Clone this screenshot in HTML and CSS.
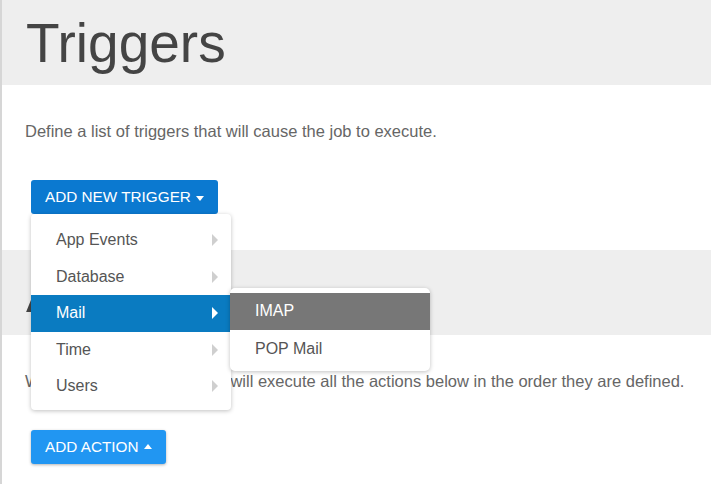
FILE: index.html
```html
<!DOCTYPE html>
<html>
<head>
<meta charset="utf-8">
<link rel="stylesheet" href="styles.css">
</head>
<body>
<div class="page">
  <div class="band"><h1 class="title">Triggers</h1></div>
  <p class="desc">Define a list of triggers that will cause the job to execute.</p>
  <div class="btn-wrap">
    <button class="btn btn-primary">ADD NEW TRIGGER <span class="caret-down"></span></button>
    <ul class="menu">
      <li class="item">App Events<span class="arrow"></span></li>
      <li class="item">Database<span class="arrow"></span></li>
      <li class="item active">Mail<span class="arrow"></span>
        <ul class="submenu">
          <li class="sub-item hover">IMAP</li>
          <li class="sub-item">POP Mail</li>
        </ul>
      </li>
      <li class="item">Time<span class="arrow"></span></li>
      <li class="item">Users<span class="arrow"></span></li>
    </ul>
  </div>
  <div class="band band-2"><h1 class="title">Actions</h1></div>
  <p class="desc">When the job is triggered, it will execute all the actions below in the order they are defined.</p>
  <div class="btn-wrap">
    <button class="btn btn-light">ADD ACTION <span class="caret-up"></span></button>
  </div>
</div>
</body>
</html>
```
FILE: styles.css
```css
html, body {
  margin: 0;
  padding: 0;
  background: #fff;
  font-family: "Liberation Sans", Arial, sans-serif;
}
.page {
  border-left: 2px solid #d6d6d6;
  min-height: 484px;
  box-sizing: border-box;
}
.band {
  background: #eeeeee;
  height: 85px;
  padding-left: 24px;
}
.band-2 {
  margin-top: 36px;
}
.title {
  margin: 0;
  padding-top: 2px;
  font-weight: normal;
  font-size: 55px;
  line-height: 83px;
  color: #444;
}
.desc {
  margin: 36px 0 0 0;
  padding-left: 23px;
  font-size: 16.5px;
  line-height: 20px;
  color: #666;
  white-space: nowrap;
}
.btn-wrap {
  position: relative;
  margin: 39px 0 0 29px;
  display: inline-block;
}
.btn {
  border: none;
  border-radius: 3px;
  color: #fff;
  font-family: "Liberation Sans", Arial, sans-serif;
  font-size: 15.3px;
  line-height: 20px;
  height: 34px;
  padding: 0 14px;
  display: flex;
  align-items: center;
  gap: 5px;
  cursor: pointer;
}
.btn-primary {
  background: #0b79d0;
}
.btn-light {
  background: #2196f2;
  box-shadow: 0 1px 3px rgba(0,0,0,0.3);
}
.caret-down {
  width: 0;
  height: 0;
  border-left: 4.5px solid transparent;
  border-right: 4.5px solid transparent;
  border-top: 5px solid #fff;
  margin-top: 2px;
}
.caret-up {
  width: 0;
  height: 0;
  border-left: 4.5px solid transparent;
  border-right: 4.5px solid transparent;
  border-bottom: 5px solid #fff;
  margin-top: -1px;
}
.menu {
  position: absolute;
  top: 100%;
  left: 0;
  width: 200px;
  margin: 0;
  padding: 8px 0 5px;
  list-style: none;
  background: #fff;
  border-radius: 4px;
  box-shadow: 0 1px 4px rgba(0,0,0,0.25);
  z-index: 10;
}
.item {
  position: relative;
  height: 36.5px;
  line-height: 36.5px;
  padding-left: 25px;
  font-size: 16px;
  color: #555;
}
.item.active {
  background: #0a7bc1;
  color: #fff;
}
.arrow {
  position: absolute;
  right: 13px;
  top: 12px;
  width: 0;
  height: 0;
  border-top: 6px solid transparent;
  border-bottom: 6px solid transparent;
  border-left: 6px solid #cfcfcf;
}
.item.active .arrow {
  border-left-color: #fff;
}
.submenu {
  position: absolute;
  top: -7px;
  left: 199px;
  width: 200px;
  margin: 0;
  padding: 5px 0;
  list-style: none;
  background: #fff;
  border-radius: 5px;
  box-shadow: 0 1px 4px rgba(0,0,0,0.25);
}
.sub-item {
  height: 36.5px;
  line-height: 36px;
  padding-left: 25px;
  font-size: 16px;
  color: #555;
}
.sub-item + .sub-item {
  line-height: 38px;
}
.sub-item.hover {
  background: #777;
  color: #fff;
}
```
